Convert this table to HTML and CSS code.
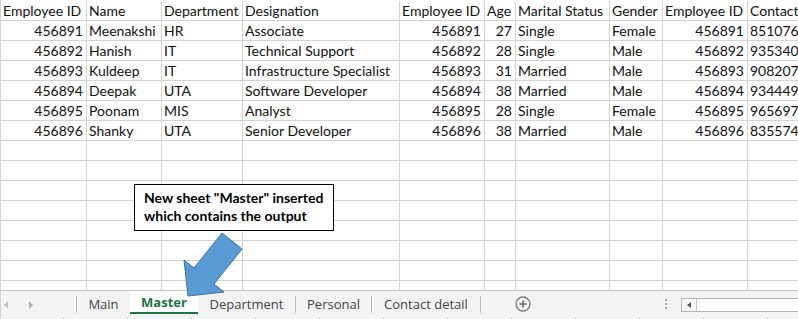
FILE: index.html
```html
<!DOCTYPE html>
<html lang="en">
<head>
<meta charset="utf-8">
<title>Master sheet</title>
<link rel="stylesheet" href="styles.css">
</head>
<body>
<div class="app">
  <div class="sheet">
    <div class="grid">
      <div class="c">Employee ID</div><div class="c">Name</div><div class="c">Department</div><div class="c">Designation</div><div class="c">Employee ID</div><div class="c">Age</div><div class="c">Marital Status</div><div class="c">Gender</div><div class="c">Employee ID</div><div class="c">Contact</div>

      <div class="c num">456891</div><div class="c">Meenakshi</div><div class="c">HR</div><div class="c">Associate</div><div class="c num">456891</div><div class="c num">27</div><div class="c">Single</div><div class="c">Female</div><div class="c num">456891</div><div class="c">8510769</div>

      <div class="c num">456892</div><div class="c">Hanish</div><div class="c">IT</div><div class="c">Technical Support</div><div class="c num">456892</div><div class="c num">28</div><div class="c">Single</div><div class="c">Male</div><div class="c num">456892</div><div class="c">9353407</div>

      <div class="c num">456893</div><div class="c">Kuldeep</div><div class="c">IT</div><div class="c">Infrastructure Specialist</div><div class="c num">456893</div><div class="c num">31</div><div class="c">Married</div><div class="c">Male</div><div class="c num">456893</div><div class="c">9082079</div>

      <div class="c num">456894</div><div class="c">Deepak</div><div class="c">UTA</div><div class="c">Software Developer</div><div class="c num">456894</div><div class="c num">38</div><div class="c">Married</div><div class="c">Male</div><div class="c num">456894</div><div class="c">9344494</div>

      <div class="c num">456895</div><div class="c">Poonam</div><div class="c">MIS</div><div class="c">Analyst</div><div class="c num">456895</div><div class="c num">28</div><div class="c">Single</div><div class="c">Female</div><div class="c num">456895</div><div class="c">9656973</div>

      <div class="c num">456896</div><div class="c">Shanky</div><div class="c">UTA</div><div class="c">Senior Developer</div><div class="c num">456896</div><div class="c num">38</div><div class="c">Married</div><div class="c">Male</div><div class="c num">456896</div><div class="c">8355744</div>

      <div class="c"></div><div class="c"></div><div class="c"></div><div class="c"></div><div class="c"></div><div class="c"></div><div class="c"></div><div class="c"></div><div class="c"></div><div class="c"></div>
      <div class="c"></div><div class="c"></div><div class="c"></div><div class="c"></div><div class="c"></div><div class="c"></div><div class="c"></div><div class="c"></div><div class="c"></div><div class="c"></div>
      <div class="c"></div><div class="c"></div><div class="c"></div><div class="c"></div><div class="c"></div><div class="c"></div><div class="c"></div><div class="c"></div><div class="c"></div><div class="c"></div>
      <div class="c"></div><div class="c"></div><div class="c"></div><div class="c"></div><div class="c"></div><div class="c"></div><div class="c"></div><div class="c"></div><div class="c"></div><div class="c"></div>
      <div class="c"></div><div class="c"></div><div class="c"></div><div class="c"></div><div class="c"></div><div class="c"></div><div class="c"></div><div class="c"></div><div class="c"></div><div class="c"></div>
      <div class="c"></div><div class="c"></div><div class="c"></div><div class="c"></div><div class="c"></div><div class="c"></div><div class="c"></div><div class="c"></div><div class="c"></div><div class="c"></div>
      <div class="c"></div><div class="c"></div><div class="c"></div><div class="c"></div><div class="c"></div><div class="c"></div><div class="c"></div><div class="c"></div><div class="c"></div><div class="c"></div>
      <div class="c"></div><div class="c"></div><div class="c"></div><div class="c"></div><div class="c"></div><div class="c"></div><div class="c"></div><div class="c"></div><div class="c"></div><div class="c"></div>
      <div class="c"></div><div class="c"></div><div class="c"></div><div class="c"></div><div class="c"></div><div class="c"></div><div class="c"></div><div class="c"></div><div class="c"></div><div class="c"></div>
    </div>
  </div>

  <div class="tabbar">
    <div class="nav">
      <span class="tri tri-left"></span>
      <span class="tri tri-right"></span>
    </div>
    <span class="sep"></span>
    <div class="tab tab-main">Main</div>
    <div class="tab tab-active">Master</div>
    <div class="tab tab-dept">Department</div>
    <span class="sep"></span>
    <div class="tab tab-pers">Personal</div>
    <span class="sep"></span>
    <div class="tab tab-contact">Contact detail</div>
    <span class="sep"></span>
    <div class="add">
      <svg width="16" height="16" viewBox="0 0 16 16"><circle cx="8" cy="8" r="7" fill="none" stroke="#7a7a7a" stroke-width="1.3"/><path d="M8 4.5v7M4.5 8h7" stroke="#6a6a6a" stroke-width="1.6"/></svg>
    </div>
    <div class="dots"><i></i><i></i><i></i></div>
    <div class="hscroll">
      <div class="hbtn"><span class="tri tri-left dark"></span></div>
      <div class="htrack"></div>
    </div>
  </div>

  <div class="callout">New sheet "Master" inserted<br>which contains the output</div>
  <svg class="arrow" width="798" height="319" viewBox="0 0 798 319">
    <polygon points="222,233 242,249 214,284 224,292 188,296 184,260 194,268" fill="#5b9bd5" stroke="#41719c" stroke-width="1"/>
  </svg>
</div>
</body>
</html>
```

FILE: styles.css
```css
html, body {
  margin: 0;
  padding: 0;
  background: #ffffff;
}

.app {
  position: relative;
  width: 798px;
  height: 319px;
  overflow: hidden;
  display: flex;
  flex-direction: column;
  font-family: "Lato", "Liberation Sans", sans-serif;
}

.sheet {
  height: 290px;
  padding-top: 1px;
  box-sizing: border-box;
  border-left: 1px solid #d4d4d4;
  overflow: hidden;
}

.grid {
  display: grid;
  grid-template-columns: 86px 75px 81px 157px 85px 31px 94px 53px 85px 120px;
  grid-auto-rows: 20px;
}

.c {
  box-sizing: border-box;
  border-right: 1px solid #d4d4d4;
  border-bottom: 1px solid #d4d4d4;
  padding: 0 3px 0 2px;
  font-size: 14px;
  line-height: 19px;
  color: #111;
  white-space: nowrap;
  overflow: visible;
}

.num {
  text-align: right;
}

.tabbar {
  height: 29px;
  box-sizing: border-box;
  border-top: 1px solid #c6c6c6;
  border-left: 1px solid #d4d4d4;
  background: #f3f3f3;
  display: flex;
  align-items: stretch;
  font-family: "Open Sans", "Liberation Sans", sans-serif;
  font-size: 13px;
  color: #444;
  background-image: repeating-linear-gradient(90deg, transparent 0 62px, #9a9a9a 62px 63px, transparent 63px 64px);
  background-size: 100% 1px;
  background-position: 0 100%;
  background-repeat: no-repeat;
}

.nav {
  width: 75px;
  display: flex;
  align-items: center;
  gap: 21px;
  padding-left: 3px;
  box-sizing: border-box;
}

.tri {
  width: 0;
  height: 0;
  border-top: 4px solid transparent;
  border-bottom: 4px solid transparent;
}

.tri-left {
  border-right: 4px solid #c4c4c4;
}

.tri-right {
  border-left: 4px solid #b0b0b0;
}

.tri-left.dark {
  border-right-color: #555;
  border-top-width: 3px;
  border-bottom-width: 3px;
}

.sep {
  width: 1px;
  margin: 5px 0 6px;
  background: #b8b8b8;
}

.tab {
  display: flex;
  align-items: center;
  justify-content: center;
  padding-bottom: 2px;
  box-sizing: border-box;
}

.tab-main { width: 53px; }
.tab-dept { width: 97px; }
.tab-pers { width: 75px; }
.tab-contact { width: 108px; }

.tab-active {
  width: 68px;
  background: #ffffff;
  color: #217346;
  font-weight: 700;
  border-bottom: 2px solid #217346;
  margin-bottom: 5px;
  padding-bottom: 0;
}

.add {
  width: 84px;
  display: flex;
  align-items: center;
  justify-content: center;
  padding-bottom: 3px;
  box-sizing: border-box;
}

.dots {
  margin-left: 100px;
  width: 16px;
  display: flex;
  flex-direction: column;
  align-items: flex-start;
  justify-content: center;
  gap: 2px;
  padding-bottom: 3px;
}

.dots i {
  display: block;
  width: 2px;
  height: 2px;
  background: #aaaaaa;
}

.hscroll {
  flex: 1;
  display: flex;
  margin: 7px 0 7px 0;
  border: 1px solid #b5b5b5;
  border-right: none;
  background: #ffffff;
}

.hbtn {
  width: 14px;
  border-right: 1px solid #c8c8c8;
  display: flex;
  align-items: center;
  justify-content: center;
  background: #f8f8f8;
}

.htrack {
  flex: 1;
}

.callout {
  position: absolute;
  left: 134px;
  top: 184px;
  width: 200px;
  height: 47px;
  box-sizing: border-box;
  border: 1px solid #000;
  background: #ffffff;
  padding: 4px 0 0 9px;
  font-family: "Lato", "Liberation Sans", sans-serif;
  font-weight: 700;
  font-size: 14px;
  line-height: 18px;
  color: #000;
  white-space: nowrap;
}

.arrow {
  position: absolute;
  left: 0;
  top: 0;
  pointer-events: none;
}
```
